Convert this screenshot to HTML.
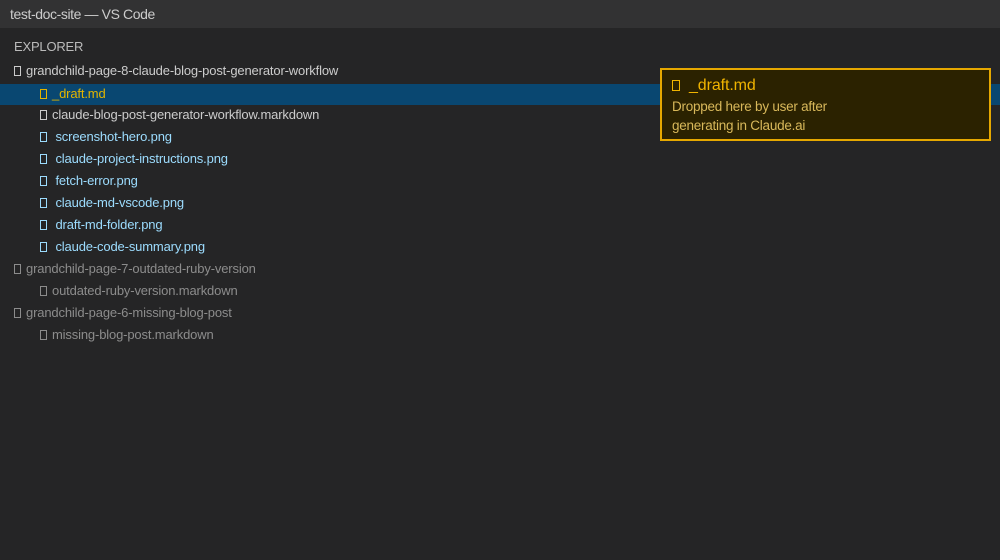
<!DOCTYPE html>
<html><head><meta charset="utf-8"><style>
body{margin:0;width:1000px;height:560px;background:#252526;font-family:"Liberation Sans",sans-serif;overflow:hidden;position:relative}
.title{height:28px;background:#323233;color:#ccc;font-size:14px;line-height:28px;padding-left:10px;letter-spacing:-0.4px}
.exp{position:absolute;left:14px;top:39px;color:#bbb;font-size:13px;letter-spacing:-0.2px}
.row{position:absolute;left:0;width:1000px;height:22px;line-height:22px;font-size:13px;letter-spacing:-0.15px;white-space:nowrap}
.b{display:inline-block;width:5px;height:8px;border:1px solid currentColor;margin-right:5px;vertical-align:-1px}
.sel{background:#094771}
.tip{position:absolute;left:660px;top:68px;width:327px;height:69px;border:2px solid #e6a800;background:#2b2200;color:#d9b53a}
.tip .h{position:absolute;left:10px;top:7px;font-size:16px;color:#f0b400;letter-spacing:-0.1px}
.tip .d{position:absolute;left:10px;top:27px;font-size:13.5px;line-height:19px;letter-spacing:-0.25px;color:#d8b85a}
</style></head><body>
<div class="title">test-doc-site — VS Code</div>
<div class="exp">EXPLORER</div>
<div class="row" style="top:60px;color:#ccc;padding-left:14px"><span class="b"></span>grandchild-page-8-claude-blog-post-generator-workflow</div>
<div class="row sel" style="top:84px;height:21px;line-height:20px;color:#e2b400;padding-left:40px"><span class="b"></span>_draft.md</div>
<div class="row" style="top:104px;color:#ccc;padding-left:40px"><span class="b"></span>claude-blog-post-generator-workflow.markdown</div>
<div class="row" style="top:126px;color:#9cdcfe;padding-left:40px"><span class="b"></span> screenshot-hero.png</div>
<div class="row" style="top:148px;color:#9cdcfe;padding-left:40px"><span class="b"></span> claude-project-instructions.png</div>
<div class="row" style="top:170px;color:#9cdcfe;padding-left:40px"><span class="b"></span> fetch-error.png</div>
<div class="row" style="top:192px;color:#9cdcfe;padding-left:40px"><span class="b"></span> claude-md-vscode.png</div>
<div class="row" style="top:214px;color:#9cdcfe;padding-left:40px"><span class="b"></span> draft-md-folder.png</div>
<div class="row" style="top:236px;color:#9cdcfe;padding-left:40px"><span class="b"></span> claude-code-summary.png</div>
<div class="row" style="top:258px;color:#8c8c8c;padding-left:14px"><span class="b"></span>grandchild-page-7-outdated-ruby-version</div>
<div class="row" style="top:280px;color:#8c8c8c;padding-left:40px"><span class="b"></span>outdated-ruby-version.markdown</div>
<div class="row" style="top:302px;color:#8c8c8c;padding-left:14px"><span class="b"></span>grandchild-page-6-missing-blog-post</div>
<div class="row" style="top:324px;color:#8c8c8c;padding-left:40px"><span class="b"></span>missing-blog-post.markdown</div>
<div class="tip"><div class="h"><span class="b" style="width:6px;height:9px;margin-right:9px"></span>_draft.md</div><div class="d">Dropped here by user after<br>generating in Claude.ai</div></div>
</body></html>
